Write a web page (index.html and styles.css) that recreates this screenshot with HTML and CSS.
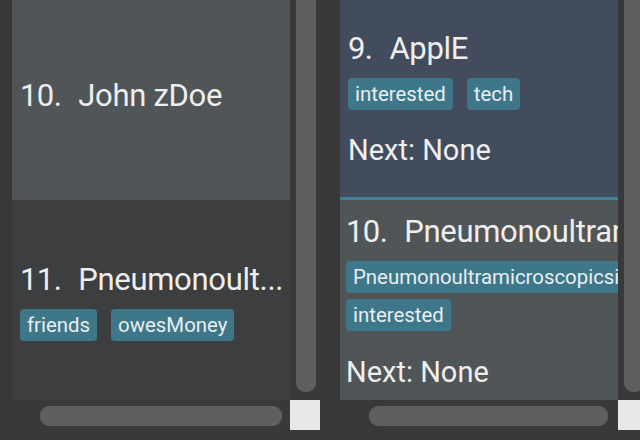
FILE: index.html
```html
<!DOCTYPE html>
<html lang="en">
<head>
<meta charset="utf-8">
<title>Contacts</title>
<link rel="stylesheet" href="styles.css">
</head>
<body>
<div class="panes">
  <section class="pane">
    <div class="viewport">
      <div class="card card-plain">
        <div class="name"><span class="idx">10.</span><span>John zDoe</span></div>
        <div class="tags tags-empty"></div>
      </div>
      <div class="card card-dark">
        <div class="name"><span class="idx">11.</span><span>Pneumonoult...</span></div>
        <div class="tags">
          <span class="tag">friends</span>
          <span class="tag">owesMoney</span>
        </div>
      </div>
    </div>
    <div class="vtrack"><div class="vthumb"></div></div>
    <div class="htrack"><div class="hthumb hthumb-left"></div></div>
    <div class="corner"></div>
  </section>

  <section class="pane">
    <div class="viewport">
      <div class="card card-selected">
        <div class="name"><span class="idx">9.</span><span>ApplE</span></div>
        <div class="tags">
          <span class="tag">interested</span>
          <span class="tag">tech</span>
        </div>
        <div class="next">Next: None</div>
      </div>
      <div class="card card-plain card-shifted">
        <div class="name"><span class="idx">10.</span><span>Pneumonoultramicroscopicsilicovolcanoconiosis</span></div>
        <div class="tags tags-stack">
          <span class="tag">Pneumonoultramicroscopicsilicovolcanoconiosis</span>
          <span class="tag">interested</span>
        </div>
        <div class="next next-far">Next: None</div>
      </div>
    </div>
    <div class="vtrack"><div class="vthumb"></div></div>
    <div class="htrack"><div class="hthumb hthumb-right"></div></div>
    <div class="corner"></div>
  </section>
</div>
</body>
</html>
```

FILE: styles.css
```css
html, body {
  margin: 0;
  padding: 0;
  width: 640px;
  height: 440px;
  overflow: hidden;
  background: #393939;
  font-family: Roboto, "Liberation Sans", sans-serif;
  color: #eeeeee;
}

.panes {
  display: flex;
  gap: 20px;
  padding-left: 12px;
}

.pane {
  flex: 0 0 308px;
  display: grid;
  grid-template-columns: 278px 30px;
  grid-template-rows: 400px 30px;
}

.viewport {
  overflow: hidden;
  display: flex;
  flex-direction: column;
}

.card {
  flex: 0 0 200px;
  box-sizing: border-box;
  height: 200px;
  display: flex;
  flex-direction: column;
  justify-content: center;
  padding-left: 8px;
  white-space: nowrap;
  overflow: hidden;
}

.card-plain { background: #505557; }
.card-dark { background: #3d3e40; }
.card-selected {
  background: #424c5d;
  border-bottom: 3px solid #3d8298;
}
.card-shifted { padding-left: 6px; padding-top: 2px; }

.name {
  font-size: 31px;
  line-height: 40px;
  letter-spacing: -0.3px;
  display: flex;
}

.idx {
  margin-right: 17px;
  letter-spacing: -0.6px;
}

.tags {
  display: flex;
  gap: 6px 14px;
  margin-top: 9px;
}
.tags-empty { margin-top: 8px; }
.tags-stack { flex-direction: column; align-items: flex-start; }

.tag {
  display: inline-block;
  background: #3e778a;
  color: #e8eef1;
  border-radius: 4px;
  font-size: 20.4px;
  line-height: 24px;
  padding: 4px 7px;
}

.next {
  font-size: 29px;
  line-height: 36px;
  margin-top: 22px;
}
.next-far { margin-top: 23px; }

.vtrack {
  overflow: hidden;
  padding-left: 6px;
}
.vthumb {
  width: 20px;
  height: 392px;
  background: #5f5f5f;
  border-radius: 0 0 9px 9px;
}

.htrack {
  padding-top: 6px;
}
.hthumb {
  height: 20px;
  background: #5f5f5f;
  border-radius: 9px;
}
.hthumb-left { margin-left: 28px; width: 242px; }
.hthumb-right { margin-left: 29px; width: 239px; }

.corner {
  background: #e8e8e8;
}
```
